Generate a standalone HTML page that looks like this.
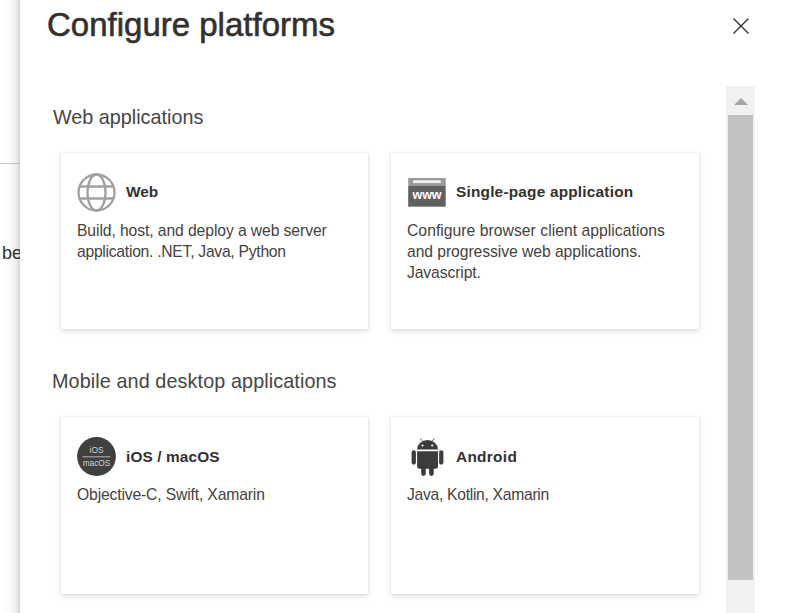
<!DOCTYPE html>
<html><head><meta charset="utf-8">
<style>
html,body{margin:0;padding:0;width:785px;height:613px;overflow:hidden;background:#fff;}
body{position:relative;font-family:"Liberation Sans",sans-serif;color:#323130;}
.bg{position:absolute;left:0;top:0;width:785px;height:613px;background:#fff;}
.bgline{position:absolute;left:0;top:163px;width:30px;height:1px;background:#cccccc;}
.bgtext{position:absolute;left:2px;top:243px;font-size:18px;line-height:20px;color:#323130;white-space:nowrap;}
.panel{position:absolute;left:20px;top:-40px;width:800px;height:700px;background:#fff;
 box-shadow:0 0 16px rgba(0,0,0,.22),0 0 5px rgba(0,0,0,.12);}
.title{position:absolute;left:27px;top:5px;font-size:33px;line-height:40px;color:#323130;white-space:nowrap;-webkit-text-stroke:0.6px #323130;}
.close{position:absolute;left:713px;top:18px;width:16px;height:16px;}
.sb{position:absolute;left:706px;top:86px;width:29px;height:540px;background:#f1f1f1;}
.sbthumb{position:absolute;left:2px;top:29px;width:25px;height:465px;background:#c1c1c1;}
.sbarrow{position:absolute;left:8px;top:12px;width:0;height:0;border-left:7px solid transparent;border-right:7px solid transparent;border-bottom:7px solid #a3a3a3;}
.sec{position:absolute;left:33px;font-size:19.8px;line-height:24px;margin-top:2px;color:#464544;white-space:nowrap;}
.card{position:absolute;width:307px;height:176px;background:#fff;
 box-shadow:0 1.5px 6px 0 rgba(0,0,0,.14),0 0 1.5px 0 rgba(0,0,0,.11);}
.icon{position:absolute;left:16px;top:20px;width:39px;height:39px;}
.ctitle{position:absolute;left:65px;top:29px;font-size:15.4px;line-height:20px;font-weight:bold;color:#323130;white-space:nowrap;}
.cdesc{position:absolute;left:16px;top:67px;font-size:15.7px;line-height:21px;color:#434241;white-space:nowrap;}
</style></head><body>
<div class="bg"></div>
<div class="bgline"></div>
<div class="bgtext">be</div>
<div class="panel"><div style="position:absolute;left:0;top:40px;width:800px;height:613px;">
  <div class="title">Configure platforms</div>
  <svg class="close" viewBox="0 0 16 16"><path d="M0.5 0.5L15.5 15.5M15.5 0.5L0.5 15.5" stroke="#323130" stroke-width="1.4" fill="none"/></svg>
  <div class="sb"><div class="sbarrow"></div><div class="sbthumb"></div></div>

  <div class="sec" style="top:103px">Web applications</div>

  <div class="card" style="left:41px;top:153px">
    <svg class="icon" viewBox="0 0 39 39"><g fill="none" stroke="#a0a0a0" stroke-width="2.3">
      <circle cx="19.5" cy="19.5" r="18"/><ellipse cx="19.5" cy="19.5" rx="9" ry="18"/>
      <line x1="2" y1="13.5" x2="37" y2="13.5"/><line x1="2" y1="25.5" x2="37" y2="25.5"/></g></svg>
    <div class="ctitle">Web</div>
    <div class="cdesc"><span style="letter-spacing:-0.09px">Build, host, and deploy a web server</span><br><span style="letter-spacing:-0.27px">application. .NET, Java, Python</span></div>
  </div>

  <div class="card" style="left:371px;top:153px;width:308px">
    <svg class="icon" viewBox="0 0 39 39">
      <rect x="1.2" y="5" width="37.5" height="8" fill="#9a9a9a"/>
      <rect x="6" y="7.2" width="27.8" height="2.9" fill="#eeeeee"/>
      <rect x="1.2" y="13" width="37.5" height="20.7" fill="#606060"/>
      <text x="20" y="25.8" text-anchor="middle" font-family="Liberation Sans" font-size="12.5" font-weight="bold" fill="#fff">www</text>
    </svg>
    <div class="ctitle" style="letter-spacing:0.2px">Single-page application</div>
    <div class="cdesc"><span style="letter-spacing:0.04px">Configure browser client applications</span><br><span style="letter-spacing:-0.06px">and progressive web applications.</span><br><span style="letter-spacing:-0.1px">Javascript.</span></div>
  </div>

  <div class="sec" style="top:367px;left:32px;letter-spacing:0.1px">Mobile and desktop applications</div>

  <div class="card" style="left:41px;top:417px;height:177px">
    <svg class="icon" viewBox="0 0 39 39">
      <circle cx="19.5" cy="19.5" r="19.4" fill="#404040"/>
      <text x="19.5" y="16.1" text-anchor="middle" font-family="Liberation Sans" font-size="8.4" fill="#d4d4d4">iOS</text>
      <rect x="5.6" y="19.4" width="27.8" height="0.9" fill="#c4c4c4"/>
      <text x="19.5" y="29.2" text-anchor="middle" font-family="Liberation Sans" font-size="8.3" fill="#d4d4d4">macOS</text>
    </svg>
    <div class="ctitle" style="letter-spacing:0.12px;top:30px">iOS / macOS</div>
    <div class="cdesc" style="letter-spacing:-0.15px">Objective-C, Swift, Xamarin</div>
  </div>

  <div class="card" style="left:371px;top:417px;width:308px;height:177px">
    <svg class="icon" viewBox="0 0 39 39">
      <g fill="#3c3c3c">
      <path d="M10.1 12.5 A10.45 9.4 0 0 1 31 12.5 Z"/>
      <path d="M10.1 14.2 H31 V29.2 A2.5 2.5 0 0 1 28.5 31.7 H12.6 A2.5 2.5 0 0 1 10.1 29.2 Z"/>
      <rect x="4.6" y="13.3" width="4.3" height="14.4" rx="2.15"/>
      <rect x="32.1" y="13.3" width="4.3" height="14.4" rx="2.15"/>
      <rect x="14.2" y="29" width="4.6" height="9.9" rx="2.3"/>
      <rect x="22.1" y="29" width="4.6" height="9.9" rx="2.3"/>
      </g>
      <line x1="13.2" y1="1.3" x2="16" y2="4.6" stroke="#3c3c3c" stroke-width="0.8"/>
      <line x1="27.5" y1="1.3" x2="24.7" y2="4.6" stroke="#3c3c3c" stroke-width="0.8"/>
      <circle cx="15.5" cy="8.5" r="1.05" fill="#fff"/>
      <circle cx="25.2" cy="8.5" r="1.05" fill="#fff"/>
    </svg>
    <div class="ctitle" style="letter-spacing:0.3px;top:30px">Android</div>
    <div class="cdesc" style="letter-spacing:-0.3px">Java, Kotlin, Xamarin</div>
  </div>
</div></div>
</body></html>
